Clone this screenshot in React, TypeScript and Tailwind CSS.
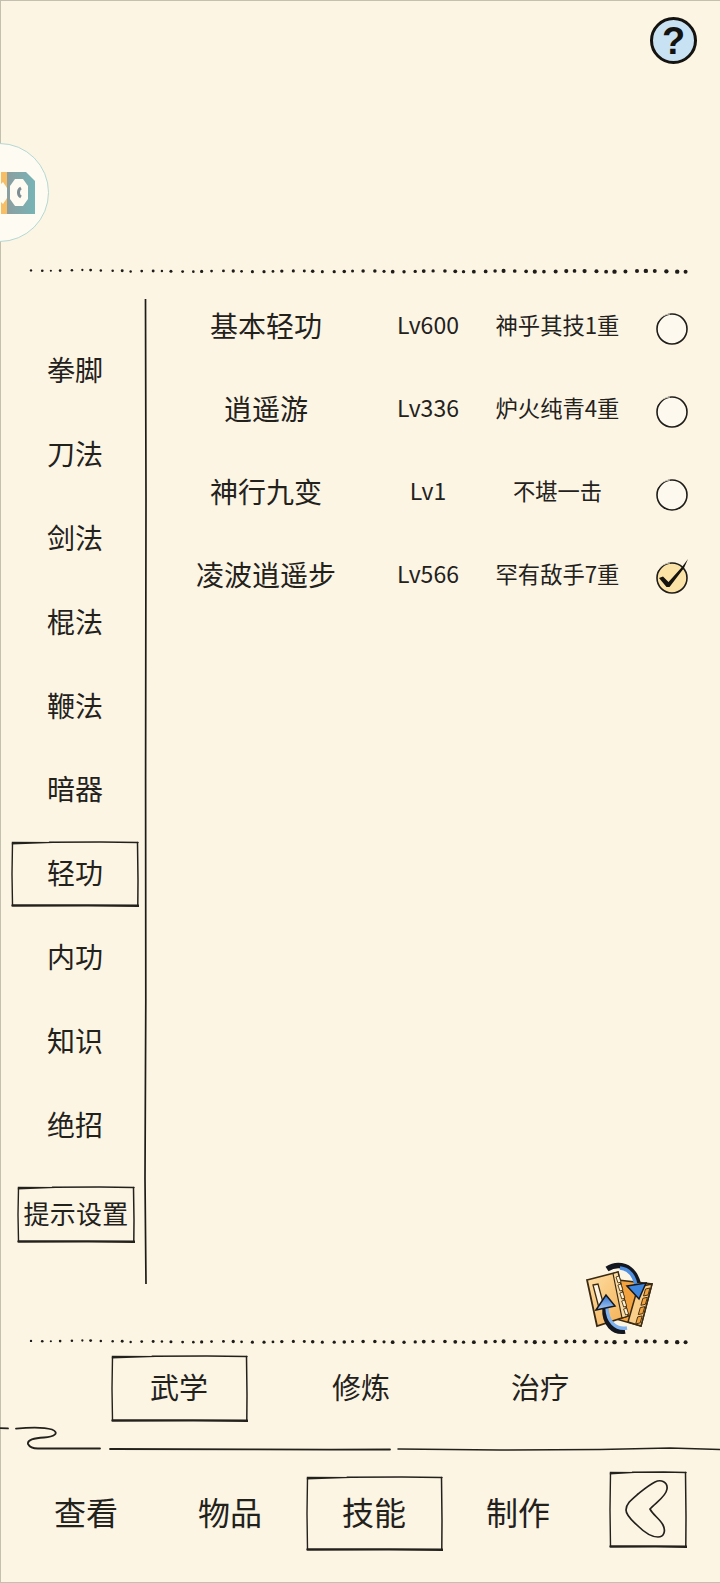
import React from "react";

const FONT = "font-['Noto_Sans_CJK_SC','Noto_Sans',sans-serif]";
const INK = "#23211c";

function Dots({ dy = 0 }: { dy?: number }) {
  const dots = [];
  for (let i = 0; i < 66; i++) {
    const x = 31 + i * 10.08 + Math.sin(i * 1.7) * 1.2;
    const t = i / 65;
    const r = 1.05 + t * 0.95 + (Math.sin(i * 2.3) + 1) * 0.15;
    const y = 8 + dy + (i < 10 ? -0.6 : 0.3) + Math.sin(i * 0.9) * 0.4;
    dots.push(<circle key={i} cx={x} cy={y} r={r} fill="#1e1c18" />);
  }
  return (
    <svg width="720" height="16" viewBox="0 0 720 16" className="block shrink-0">
      {dots}
    </svg>
  );
}

function SketchFrame({ w, h, children, className = "", lift = 0 }: { w: number; h: number; children?: React.ReactNode; className?: string; lift?: number }) {
  return (
    <div className={`relative flex items-center justify-center shrink-0 ${className}`} style={{ width: w, height: h }}>
      <svg width={w} height={h} viewBox={`0 0 ${w} ${h}`} className="absolute inset-0" fill="none" strokeLinecap="round">
        <path d={`M0.8 0.8 L${w * 0.38} 0.9 L${w * 0.38} 1.7 L0.8 3.6 Z`} fill={INK} />
        <path d={`M${w * 0.3} 1.3 L${w * 0.7} 1 L${w - 1} 1.5`} stroke={INK} strokeWidth="1.4" />
        <path d={`M1.5 2 L1 ${h * 0.5} L1.5 ${h - 2}`} stroke={INK} strokeWidth="1.4" />
        <path d={`M${w - 1.5} 1.5 L${w - 1} ${h * 0.6} L${w - 1.2} ${h - 2}`} stroke={INK} strokeWidth="1.5" />
        <path d={`M1.5 ${h - 1.5} L${w * 0.6} ${h - 1.6} L${w - 0.5} ${h - 1.2}`} stroke={INK} strokeWidth="2.4" />
      </svg>
      <span className="relative" style={lift ? { paddingBottom: lift } : undefined}>{children}</span>
    </div>
  );
}

function SidebarItem({ label, active }: { label: string; active?: boolean }) {
  return (
    <div className="h-[83.9px] flex items-center justify-center shrink-0">
      {active ? (
        <SketchFrame w={128} h={66} lift={4}>{label}</SketchFrame>
      ) : (
        <span className="pb-[4px]">{label}</span>
      )}
    </div>
  );
}

function Radio({ checked }: { checked?: boolean }) {
  return (
    <div className="relative w-[32px] h-[32px]">
      <svg width="32" height="32" viewBox="0 0 32 32" className="block overflow-visible">
        <circle cx="16" cy="16" r="15" fill={checked ? "#fbe2a6" : "#fdf9ef"} stroke="#1f1d19" strokeWidth="1.6" />
        <path d="M2 8 A15 15 0 0 1 14 1" fill="none" stroke="#fcf5e4" strokeWidth="0.8" />
        {checked && (
          <path d="M3 16 L7 14.5 L12.5 20 L26 5 L32 -3 L28 6 L13.5 25 L10.5 25 Z" fill="#15130f" />
        )}
      </svg>
    </div>
  );
}

const skills = [
  ["基本轻功", "Lv600", "神乎其技1重", false],
  ["逍遥游", "Lv336", "炉火纯青4重", false],
  ["神行九变", "Lv1", "不堪一击", false],
  ["凌波逍遥步", "Lv566", "罕有敌手7重", true],
] as const;

function FilmIcon() {
  return (
    <svg width="80" height="80" viewBox="0 0 80 80" className="block">
      <defs>
        <linearGradient id="c1" x1="0" y1="0" x2="1" y2="1">
          <stop offset="0" stopColor="#fde0a8" />
          <stop offset="1" stopColor="#f5ae50" />
        </linearGradient>
        <linearGradient id="a1" x1="0" y1="0" x2="0" y2="1">
          <stop offset="0" stopColor="#2f6fd0" />
          <stop offset="1" stopColor="#a9cdf5" />
        </linearGradient>
      </defs>
      <polygon points="38,24 72,28 61,70 36,63" fill="#f2a33f" stroke="#3b2a12" strokeWidth="1.5" />
      <polygon points="58,31 72,28 61,70 48,66" fill="#f9cd8a" stroke="#3b2a12" strokeWidth="1.5" />
      {[0, 1, 2, 3].map((i) => (
        <polygon
          key={i}
          points={`${65.5 - i * 2.6},${33 + i * 9.3} ${70 - i * 2.6},${32 + i * 9.3} ${68 - i * 2.6},${39 + i * 9.3} ${63.5 - i * 2.6},${40 + i * 9.3}`}
          fill="#f2a33f"
          stroke="#4a3312"
          strokeWidth="1"
        />
      ))}
      <path d="M27 13 C38 6 53 9 58 27" fill="none" stroke="#14171f" strokeWidth="5.5" />
      <path d="M40 12 C48 13 54 19 56 29" fill="none" stroke="#4f8fe0" strokeWidth="3.4" />
      <polygon points="47,30 66,27 59,43" fill="#3f86de" stroke="#14171f" strokeWidth="1.5" />
      <polygon points="7,24 38,16 48,60 17,70" fill="url(#c1)" stroke="#3b2a12" strokeWidth="1.8" />
      <polygon points="33,17.5 38,16 48,60 42,62" fill="#fbdba4" stroke="#3b2a12" strokeWidth="1.2" />
      {[0, 1, 2, 3, 4].map((i) => (
        <polygon
          key={i}
          points={`${36 + i * 1.9},${21 + i * 8} ${39 + i * 1.9},${20 + i * 8} ${41 + i * 1.9},${26 + i * 8} ${38 + i * 1.9},${27 + i * 8}`}
          fill="#fdf0d4"
          stroke="#4a3312"
          strokeWidth="0.9"
        />
      ))}
      <polygon points="13,29 18,28 24,50 19,52" fill="#fff5e2" stroke="#3b2a12" strokeWidth="1.3" />
      <path d="M45 75 C34 77 24 68 25 52" fill="none" stroke="#14171f" strokeWidth="5.5" />
      <path d="M47 72 C35 74 27.5 65 27 52" fill="none" stroke="#7fb2ee" strokeWidth="3.4" />
      <polygon points="16,54 35,50 26,39" fill="url(#a1)" stroke="#14171f" strokeWidth="1.5" />
    </svg>
  );
}

export default function App() {
  return (
    <div className={`relative w-[720px] h-[1583px] overflow-hidden flex flex-col bg-[#fcf5e4] text-[#23211c] ${FONT} shadow-[inset_1px_1px_0_#c4c0b0,inset_0_-1px_0_#c4c0b0]`}>
      {/* top area */}
      <header className="h-[262px] shrink-0 flex justify-end pt-[17px] pr-[23px]">
        <div className="w-[47px] h-[47px] rounded-full bg-[#c9e2f3] border-[3.5px] border-[#14130f] flex items-center justify-center text-[38px] leading-none font-black text-[#14130f] font-['Liberation_Sans',sans-serif]">
          ?
        </div>
      </header>
      <Dots dy={1} />

      {/* floating widget */}
      <div className="absolute left-[-50px] top-[143px] w-[99px] h-[99px] rounded-full bg-[#fefbf3] border-[1.5px] border-[#b4d8d3] overflow-hidden">
        <svg width="50" height="99" viewBox="0 0 50 99" className="absolute left-[50px] top-0">
          <defs>
            <linearGradient id="t1" x1="0" y1="0" x2="1" y2="0">
              <stop offset="0" stopColor="#8b9ea0" />
              <stop offset="1" stopColor="#77b4b6" />
            </linearGradient>
          </defs>
          <rect x="0" y="28" width="6" height="42" fill="#f7be66" />
          <polygon points="6,28 25,28 34,37 34,70 6,70" fill="url(#t1)" />
          <polygon points="0,40 2,38 6,44 6,54 2,60 0,58" fill="#fefbf3" />
          <polygon points="9,42 14,35 22,35 27,42 27,55 22,62 14,62 9,55" fill="#fefbf3" />
          <path d="M20 44 A4.5 5 0 0 0 20 53" fill="none" stroke="#7c8e93" strokeWidth="3" />
        </svg>
      </div>

      {/* main */}
      <main className="h-[1056px] shrink-0 flex">
        <nav className="w-[144px] shrink-0 pt-[51px] pl-[6px] flex flex-col text-[28px] leading-none">
          {["拳脚", "刀法", "剑法", "棍法", "鞭法", "暗器"].map((s) => (
            <SidebarItem key={s} label={s} />
          ))}
          <SidebarItem label="轻功" active />
          {["内功", "知识", "绝招"].map((s) => (
            <SidebarItem key={s} label={s} />
          ))}
          <div className="mt-[18px] ml-[11px] text-[26px] tracking-[0.3px]">
            <SketchFrame w={118} h={57} lift={2}>提示设置</SketchFrame>
          </div>
        </nav>
        <svg width="4" height="985" viewBox="0 0 4 985" className="mt-[21px] shrink-0 block" fill="none">
          <path d="M1.5 0 L2 200 L1.6 480 L1.8 700 L1 880 L2 985" stroke="#1e1c18" strokeWidth="1.7" />
        </svg>
        <section className="flex-1 pt-[5px] flex flex-col">
          {skills.map(([name, lv, rank, checked]) => (
            <div key={name} className="h-[83px] grid grid-cols-[236px_88px_171px_58px] items-center">
              <div className="text-[28px] leading-none text-center">{name}</div>
              <div className="text-[23px] leading-none text-center">{lv}</div>
              <div className="text-[22.3px] leading-none text-center">{rank}</div>
              <div className="flex justify-center pt-[9px]">
                <Radio checked={checked} />
              </div>
            </div>
          ))}
          <div className="mt-auto mb-[-2px] ml-[432px]">
            <FilmIcon />
          </div>
        </section>
      </main>
      <Dots dy={-0.5} />

      {/* sub tabs */}
      <div className="h-[75px] shrink-0 pt-[5px] pl-[89px] grid grid-cols-[180px_184px_174px] items-start text-[29px] leading-none">
        {["武学", "修炼", "治疗"].map((s, i) => (
          <div key={s} className="h-[67px] flex items-center justify-center">
            {i === 0 ? <SketchFrame w={137} h={67} lift={4}>{s}</SketchFrame> : <span className="pb-[4px]">{s}</span>}
          </div>
        ))}
      </div>

      {/* swirl divider */}
      <svg width="720" height="30" viewBox="0 0 720 30" className="block shrink-0" fill="none" stroke="#23211c" strokeLinecap="round">
        <path d="M0 3.2 L8 3.4 M16 3.6 C28 2.4 44 2 52 4.5 C60 8 54 12 44 12.5 C34 13 27 15 28 19 C30 23 34 23.5 38 23.5 L100 23.5" strokeWidth="1.8" />
        <path d="M110 24 L250 24.3 L330 24.6 L390 24.5" strokeWidth="1.8" />
        <path d="M398 24 L500 25 L600 24.6 L670 23 L720 24.4" strokeWidth="1.5" />
      </svg>

      {/* bottom nav */}
      <div className="flex-1 pt-[16px] pl-[14px] flex items-start text-[32px] leading-none">
        {["查看", "物品", "技能", "制作"].map((s, i) => (
          <div key={s} className="w-[144px] h-[75px] mt-[5px] flex items-center justify-center">
            {i === 2 ? <SketchFrame w={137} h={75} lift={5}>{s}</SketchFrame> : <span className="pb-[5px]">{s}</span>}
          </div>
        ))}
        <SketchFrame w={78} h={77} className="ml-[19px]">
          <svg width="78" height="77" viewBox="0 0 78 77" fill="none" className="block">
            <path
              d="M41 38 C46 32 57 26 58 18 C59 11 52 8 46 11 C40 14 34 19 29 23 C22 29 17 33 17 39 C17 45 24 50 29 55 C35 61 42 66 49 66 C55 66 57 60 54 54 C51 48 44 44 41 38 Z"
              stroke="#23211c"
              strokeWidth="1.7"
            />
          </svg>
        </SketchFrame>
      </div>
    </div>
  );
}
